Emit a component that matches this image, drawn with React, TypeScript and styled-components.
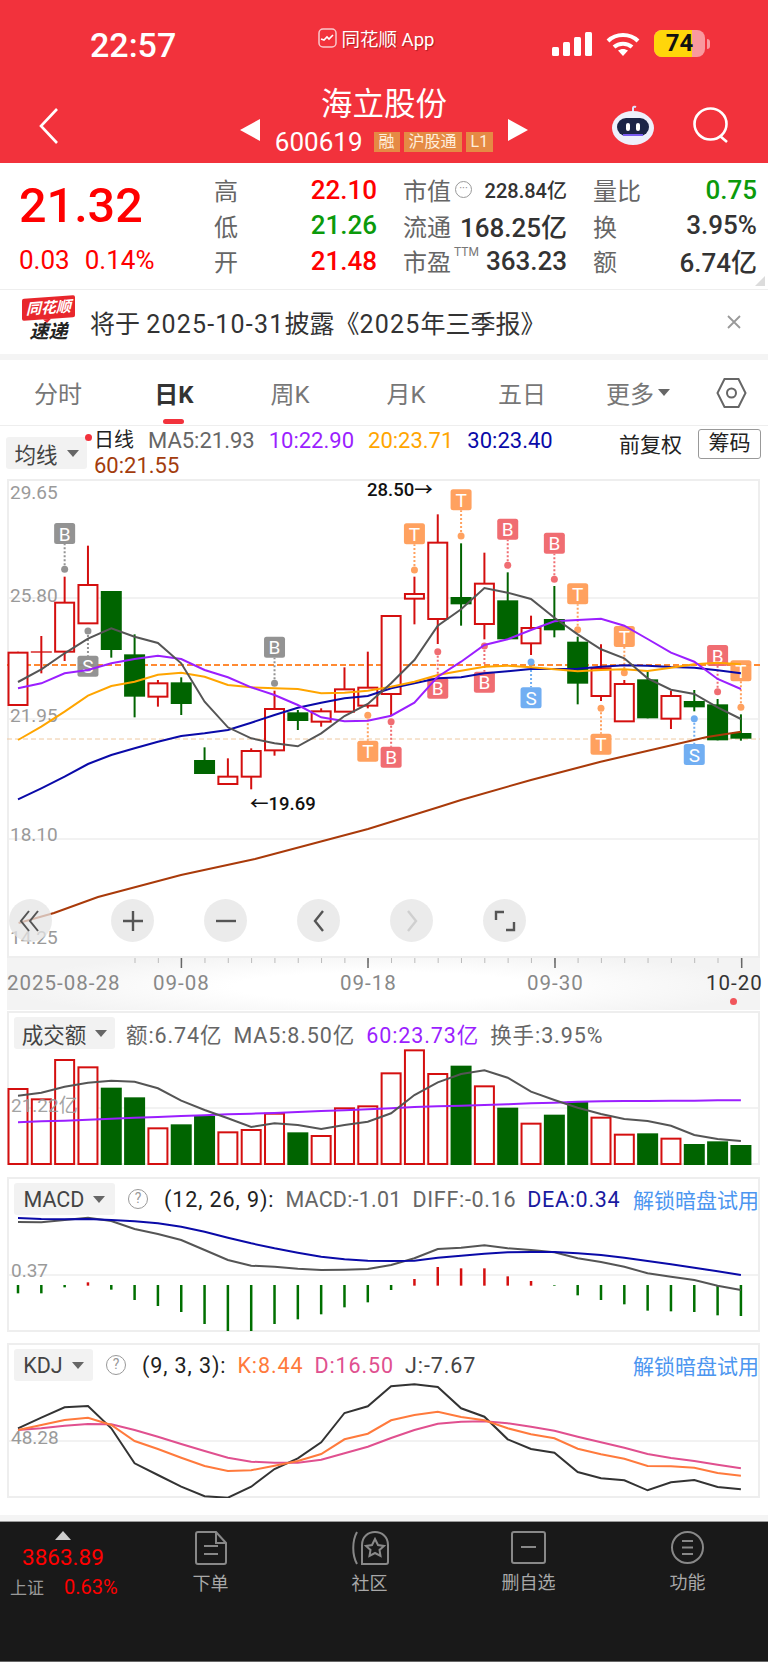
import React from "react";
import styled, { createGlobalStyle } from "styled-components";

const GlobalStyle = createGlobalStyle`
  html, body { margin: 0; padding: 0; background: #fff; }
  body { font-family: Roboto, "Noto Sans CJK SC", sans-serif; }
`;

const RED = "#ff0000";
const GREEN = "#0b9a0b";
const CANDLE_RED = "#d40f0f";
const CANDLE_GREEN = "#006400";
const LABEL_GREY = "#9a9a9a";

// chart data was read off the screenshot at 3x, so values are kept in crop pixels
const cx = (i: number) => 18 + 23.32 * i;
const mainY = (z: number) => 480 + z / 3;
const volY = (z: number) => 1010 + z / 3;
const macdY = (z: number) => 1170 + z / 3;
const kdjY = (z: number) => 1335 + z / 3;
const pts = (vals: number[], toY: (z: number) => number) =>
  vals.map((v, i) => `${cx(i).toFixed(1)},${toY(v).toFixed(1)}`).join(" ");

type Candle = ["u" | "d", number, number, number, number];
const candles: Candle[] = [
  ["u", 515, 518, 675, 675],
  ["u", 468, 514, 518, 580],
  ["u", 290, 368, 515, 543],
  ["u", 197, 315, 430, 430],
  ["d", 333, 333, 510, 533],
  ["d", 463, 523, 650, 712],
  ["u", 600, 610, 650, 680],
  ["d", 592, 607, 672, 705],
  ["d", 802, 840, 882, 882],
  ["u", 835, 890, 912, 912],
  ["u", 805, 813, 890, 928],
  ["u", 632, 687, 811, 827],
  ["d", 690, 697, 723, 750],
  ["u", 685, 694, 725, 740],
  ["u", 562, 628, 695, 695],
  ["u", 515, 623, 677, 685],
  ["u", 408, 408, 642, 705],
  ["u", 290, 342, 356, 433],
  ["u", 103, 188, 417, 492],
  ["d", 190, 351, 373, 437],
  ["u", 218, 311, 432, 478],
  ["d", 277, 361, 478, 478],
  ["u", 407, 444, 490, 525],
  ["d", 318, 417, 451, 472],
  ["d", 470, 485, 611, 673],
  ["u", 493, 565, 648, 663],
  ["u", 600, 612, 724, 724],
  ["d", 575, 598, 715, 715],
  ["u", 632, 648, 716, 747],
  ["d", 630, 663, 682, 694],
  ["d", 657, 673, 781, 781],
  ["d", 703, 759, 776, 782],
];

const markColors = { grey: "#8e8e8e", orange: "#ff9d57", red: "#f0666b", blue: "#6aaaf2" };
type Mark = { i: number; label: string; color: keyof typeof markColors; box: number; dot: number };
const marks: Mark[] = [
  { i: 2, label: "B", color: "grey", box: 129, dot: 268 },
  { i: 3, label: "S", color: "grey", box: 527, dot: 453 },
  { i: 11, label: "B", color: "grey", box: 470, dot: 610 },
  { i: 15, label: "T", color: "orange", box: 782, dot: 706 },
  { i: 16, label: "B", color: "red", box: 800, dot: 725 },
  { i: 17, label: "T", color: "orange", box: 130, dot: 270 },
  { i: 18, label: "B", color: "red", box: 593, dot: 515 },
  { i: 19, label: "T", color: "orange", box: 28, dot: 168 },
  { i: 20, label: "B", color: "red", box: 575, dot: 498 },
  { i: 21, label: "B", color: "red", box: 116, dot: 256 },
  { i: 22, label: "S", color: "blue", box: 622, dot: 546 },
  { i: 23, label: "B", color: "red", box: 158, dot: 298 },
  { i: 24, label: "T", color: "orange", box: 310, dot: 449 },
  { i: 25, label: "T", color: "orange", box: 761, dot: 685 },
  { i: 26, label: "T", color: "orange", box: 438, dot: 578 },
  { i: 29, label: "S", color: "blue", box: 792, dot: 716 },
  { i: 30, label: "B", color: "red", box: 495, dot: 635 },
  { i: 31, label: "T", color: "orange", box: 541, dot: 682 },
];

const ma5 = [606, 568, 520, 476, 445, 470, 489, 550, 665, 742, 775, 790, 799, 760, 708, 672, 610, 540, 437, 388, 324, 338, 357, 413, 463, 508, 535, 595, 629, 642, 682, 717];
const ma10 = [625, 610, 580, 570, 550, 537, 527, 537, 570, 592, 622, 645, 675, 712, 724, 722, 707, 668, 590, 545, 495, 478, 450, 424, 420, 416, 437, 477, 518, 545, 597, 627];
const ma20 = [780, 740, 695, 647, 618, 605, 584, 578, 590, 615, 622, 625, 627, 640, 638, 632, 620, 605, 585, 572, 560, 557, 562, 568, 574, 570, 568, 573, 563, 553, 548, 553];
const ma30 = [958, 925, 890, 852, 825, 805, 785, 768, 760, 750, 728, 705, 683, 668, 655, 648, 625, 610, 595, 592, 580, 574, 567, 567, 566, 560, 556, 557, 561, 563, 571, 580];
const ma60 = "18.6,923 54,913 98,897 181,875 255,859 368,829 439,807 461,800 531,780 600.7,761.7 707,737 741,731.7";

const volTops = [237, 268, 150, 172, 233, 262, 355, 343, 318, 367, 360, 311, 367, 378, 295, 289, 190, 121, 192, 167, 229, 293, 341, 314, 275, 323, 374, 370, 386, 402, 394, 405];
const volMa5 = [257, 248, 230, 218, 212, 215, 235, 272, 300, 325, 351, 340, 345, 357, 345, 335, 310, 255, 217, 192, 181, 203, 245, 270, 293, 312, 327, 333, 347, 375, 387, 393];
const volMa60 = [337, 334, 332, 329, 326, 323, 321, 318, 316, 313, 311, 309, 306, 303, 301, 298, 295, 291, 289, 287, 285, 283, 280, 278, 275, 274, 273, 273, 272, 272, 271, 271];

const macdBars = [370, 370, 352, 337, 359, 390, 408, 426, 462, 483, 483, 462, 448, 433, 412, 397, 360, 327, 291, 295, 295, 319, 333, 347, 376, 390, 403, 422, 424, 426, 436, 438];
const macdDiff = [156, 157, 150, 143, 153, 177, 192, 210, 240, 270, 287, 290, 296, 300, 299, 297, 285, 265, 237, 233, 226, 235, 240, 247, 265, 276, 290, 310, 320, 330, 347, 360];
const macdDea = [144, 147, 148, 147, 150, 154, 160, 170, 185, 203, 220, 235, 248, 260, 268, 272, 273, 272, 263, 257, 251, 247, 246, 246, 250, 255, 263, 273, 283, 293, 304, 315];

const kdjK = [285, 270, 255, 248, 270, 318, 342, 368, 393, 408, 406, 392, 378, 357, 313, 296, 256, 240, 230, 246, 256, 280, 298, 310, 341, 358, 371, 393, 394, 398, 414, 422];
const kdjD = [285, 280, 272, 267, 268, 285, 305, 327, 348, 368, 380, 383, 383, 374, 355, 335, 309, 285, 266, 260, 259, 265, 275, 287, 305, 322, 338, 357, 369, 378, 389, 400];
const kdjJ = [280, 248, 217, 213, 280, 385, 420, 455, 484, 488, 455, 402, 370, 322, 234, 214, 154, 148, 156, 220, 245, 313, 342, 353, 411, 430, 436, 466, 442, 435, 456, 463];

const Page = styled.div`
  width: 768px;
  height: 1662px;
  overflow: hidden;
  display: flex;
  flex-direction: column;
  background: #fff;
`;

/* ---------- red header ---------- */
const Header = styled.header`
  height: 163px;
  flex: none;
  background: #f2323c;
  color: #fff;
  display: flex;
  flex-direction: column;
`;
const StatusBar = styled.div`
  height: 87px;
  display: grid;
  grid-template-columns: 1fr auto 1fr;
  align-items: center;
`;
const Clock = styled.div`
  padding-left: 90px;
  padding-top: 2px;
  font-size: 34px;
  font-weight: 500;
`;
const CarrierApp = styled.div`
  display: flex;
  align-items: center;
  gap: 5px;
  margin: 0 16px 11px 0;
  font-size: 18.5px;
  color: #fff;
  text-shadow: 1px 1px 1px rgba(90, 0, 0, 0.45);
`;
const StatusIcons = styled.div`
  display: flex;
  align-items: center;
  justify-content: flex-end;
  gap: 14px;
  padding-right: 58px;
`;
const Battery = styled.div`
  position: relative;
  width: 51px;
  height: 27px;
  border-radius: 8px;
  overflow: hidden;
  background: rgba(255, 255, 255, 0.5);
  &::before {
    content: "";
    position: absolute;
    inset: 0 13px 0 0;
    background: #ffd60a;
  }
`;
const BatteryNub = styled.div`
  width: 3px;
  height: 10px;
  margin-left: -12px;
  background: rgba(255, 255, 255, 0.5);
  border-radius: 0 3px 3px 0;
`;
const BatteryText = styled.span`
  position: absolute;
  inset: 0;
  text-align: center;
  line-height: 27px;
  color: #111;
  font-size: 24px;
  font-weight: 700;
`;
const NavBar = styled.div`
  flex: 1;
  display: grid;
  grid-template-columns: 1fr auto 1fr;
  align-items: center;
  margin-top: -6px;
`;
const BackButton = styled.div`
  padding-left: 38px;
  padding-top: 8px;
  display: flex;
`;
const TitleGroup = styled.div`
  display: flex;
  align-items: center;
  gap: 15px;
`;
const Arrow = styled.div<{ $dir: "left" | "right" }>`
  width: 0;
  height: 0;
  margin-top: 16px;
  border-top: 11px solid transparent;
  border-bottom: 11px solid transparent;
  ${({ $dir }) =>
    $dir === "left" ? "border-right: 20px solid #fff;" : "border-left: 20px solid #fff;"}
`;
const TitleStack = styled.div`
  display: flex;
  flex-direction: column;
  align-items: center;
`;
const StockName = styled.div`
  font-size: 31.5px;
  line-height: 40px;
`;
const CodeRow = styled.div`
  display: flex;
  align-items: center;
  gap: 4px;
  height: 34px;
`;
const StockCode = styled.span`
  font-size: 26px;
  margin-right: 7px;
`;
const Tag = styled.span`
  height: 20px;
  padding: 0 5px;
  background: #e58a44;
  color: #ffeedd;
  font-size: 16px;
  line-height: 20px;
  white-space: nowrap;
`;
const NavRight = styled.div`
  display: flex;
  justify-content: flex-end;
  align-items: center;
  gap: 38px;
  padding-right: 39px;
  padding-top: 6px;
`;

/* ---------- quote ---------- */
const QuoteSection = styled.section`
  position: relative;
  height: 126px;
  flex: none;
  display: flex;
  box-sizing: border-box;
  padding-top: 9px;
`;
const PriceBlock = styled.div`
  width: 214px;
  flex: none;
  padding-left: 19px;
  box-sizing: border-box;
`;
const BigPrice = styled.div`
  font-size: 48.5px;
  font-weight: 500;
  line-height: 68px;
  color: ${RED};
`;
const PriceChange = styled.div`
  display: flex;
  gap: 15px;
  margin-top: 4px;
  font-size: 26px;
  line-height: 32px;
  color: ${RED};
`;
const QuoteGrid = styled.div`
  display: grid;
  grid-template-columns: 163px 164px 164px;
  column-gap: 26px;
  grid-auto-rows: 35.5px;
`;
const QuoteRow = styled.div`
  position: relative;
  display: flex;
  align-items: center;
  justify-content: space-between;
`;
const QuoteLabel = styled.span`
  font-size: 24px;
  color: #666;
`;
const QuoteValue = styled.span<{ $color?: string; $size?: number }>`
  font-size: ${({ $size }) => $size ?? 26}px;
  font-weight: 500;
  color: ${({ $color }) => $color ?? "#333"};
`;
const LabelGroup = styled.span`
  display: flex;
  align-items: center;
  gap: 4px;
`;
const MoreDot = styled.span`
  width: 17px;
  height: 17px;
  box-sizing: border-box;
  border: 1px solid #999;
  border-radius: 50%;
  color: #888;
  font-size: 11px;
  line-height: 13px;
  text-align: center;
`;
const TtmMark = styled.span`
  font-size: 12px;
  color: #777;
  align-self: flex-start;
  margin: 2px 0 0 -1px;
`;
const CornerFold = styled.div`
  position: absolute;
  right: 3px;
  bottom: 3px;
  width: 0;
  height: 0;
  border-left: 10px solid transparent;
  border-bottom: 10px solid #dcdcdc;
`;

/* ---------- news banner ---------- */
const Banner = styled.section`
  height: 71px;
  flex: none;
  display: flex;
  align-items: center;
  box-sizing: border-box;
  padding: 0 26px 0 22px;
  border-top: 1px solid #eee;
  border-bottom: 6px solid #f4f4f4;
`;
const BrandLogo = styled.div`
  width: 53px;
  display: flex;
  flex-direction: column;
  align-items: center;
  margin-top: -4px;
`;
const BrandTag = styled.div`
  position: relative;
  width: 53px;
  height: 22px;
  background: #e8262c;
  border-radius: 2px;
  color: #fff;
  font-size: 15px;
  font-weight: 700;
  font-style: italic;
  line-height: 22px;
  text-align: center;
  white-space: nowrap;
  transform: skewY(-4deg);
  &::after {
    content: "";
    position: absolute;
    left: 21px;
    bottom: -4px;
    border-left: 4px solid transparent;
    border-right: 4px solid transparent;
    border-top: 4px solid #e8262c;
  }
`;
const BrandSub = styled.div`
  margin-top: 1px;
  font-size: 19px;
  font-weight: 700;
  font-style: italic;
  line-height: 23px;
  color: #222;
`;
const BannerText = styled.div`
  flex: 1;
  margin-left: 15px;
  font-size: 25px;
  color: #333;
  white-space: nowrap;
`;
const BannerNum = styled.span`
  letter-spacing: 1.2px;
`;

/* ---------- tabs ---------- */
const TabBar = styled.nav`
  height: 66px;
  flex: none;
  box-sizing: border-box;
  display: flex;
  align-items: center;
  border-bottom: 1px solid #eee;
`;
const Tab = styled.div<{ $active?: boolean }>`
  position: relative;
  flex: none;
  width: 116px;
  height: 100%;
  display: flex;
  align-items: center;
  justify-content: center;
  font-size: 24px;
  font-weight: ${({ $active }) => ($active ? 700 : 400)};
  color: ${({ $active }) => ($active ? "#333" : "#777")};
  ${({ $active }) =>
    $active &&
    `&::after {
      content: "";
      position: absolute;
      left: 47px;
      bottom: 1px;
      width: 21px;
      height: 5px;
      border-radius: 3px;
      background: #f2323c;
    }`}
`;
const TabCaret = styled.span`
  margin-left: 4px;
  border-left: 6px solid transparent;
  border-right: 6px solid transparent;
  border-top: 7px solid #666;
`;
const TabGear = styled.div`
  display: flex;
  margin-left: 20px;
`;

/* ---------- main chart ---------- */
const LegendBar = styled.div`
  height: 53px;
  flex: none;
  display: flex;
  padding-left: 6px;
  box-sizing: border-box;
`;
const Picker = styled.div<{ $width: number }>`
  width: ${({ $width }) => $width}px;
  height: 32px;
  box-sizing: border-box;
  flex: none;
  display: flex;
  align-items: center;
  justify-content: center;
  gap: 9px;
  border-radius: 3px;
  background: #f2f2f2;
  color: #444;
  font-size: 21.5px;
`;
const PickerCaret = styled.span`
  border-left: 6px solid transparent;
  border-right: 6px solid transparent;
  border-top: 7px solid #666;
`;
const MainPicker = styled(Picker)`
  margin-top: 11px;
`;
const LegendText = styled.div`
  position: relative;
  width: 480px;
  margin-left: 7px;
  display: flex;
  flex-wrap: wrap;
  column-gap: 14px;
  align-content: flex-start;
  font-size: 22px;
  line-height: 25px;
  padding-top: 2px;
  &::before {
    content: "";
    position: absolute;
    left: -9px;
    top: 8px;
    width: 7px;
    height: 7px;
    border-radius: 50%;
    background: #f2323c;
  }
`;
const LegendItem = styled.span<{ $color: string; $size?: number }>`
  color: ${({ $color }) => $color};
  ${({ $size }) => ($size ? `font-size: ${$size}px;` : "")}
  white-space: nowrap;
`;
const LegendRight = styled.div`
  flex: 1;
  display: flex;
  align-items: flex-start;
  justify-content: flex-end;
  gap: 16px;
  padding: 3px 7px 0 0;
`;
const AdjustLabel = styled.span`
  font-size: 21px;
  line-height: 32px;
  color: #222;
`;
const ChipButton = styled.span`
  width: 63px;
  height: 30px;
  box-sizing: border-box;
  border: 1px solid #999;
  border-radius: 3px;
  font-size: 21px;
  line-height: 27px;
  text-align: center;
  color: #222;
`;
const MainChart = styled.div`
  position: relative;
  flex: none;
  width: 753px;
  height: 479px;
  margin-left: 7px;
  box-sizing: border-box;
`;
const ChartSvg = styled.svg`
  display: block;
  position: absolute;
  inset: 0;
`;
const AxisText = styled.text`
  font-size: 19px;
  fill: ${LABEL_GREY};
`;
const ExtremeText = styled.text`
  font-size: 18.5px;
  font-weight: 500;
  fill: #111;
`;
const MarkText = styled.text`
  font-size: 19px;
  fill: #fff;
  text-anchor: middle;
`;
const Toolbar = styled.div`
  position: absolute;
  left: 2px;
  top: 420px;
  display: flex;
  gap: 50px;
  & > :first-child {
    margin-right: 9.4px;
  }
`;
const RoundButton = styled.div`
  width: 43px;
  height: 43px;
  border-radius: 50%;
  background: rgba(228, 228, 228, 0.75);
  display: flex;
  align-items: center;
  justify-content: center;
`;

/* ---------- date axis ---------- */
const DateAxis = styled.div`
  position: relative;
  flex: none;
  height: 52px;
  margin-left: 7px;
  width: 753px;
  background: radial-gradient(ellipse 50% 70% at 50% 55%, #fff 40%, #f3f3f3 100%);
`;
const TickSvg = styled.svg`
  display: block;
  position: absolute;
  inset: 0;
`;
const DateLabels = styled.div`
  display: grid;
  grid-template-columns: 146px 187px 187px 179px auto;
  padding-top: 10px;
  font-size: 20.5px;
  letter-spacing: 1px;
  line-height: 30px;
  color: #888;
  white-space: nowrap;
`;
const LatestDate = styled.span`
  position: relative;
  color: #333;
  &::after {
    content: "";
    position: absolute;
    left: 24px;
    top: 30px;
    width: 7px;
    height: 7px;
    border-radius: 50%;
    background: #f0555b;
  }
`;

/* ---------- indicator panels ---------- */
const Panel = styled.section<{ $height: number; $gap: number }>`
  position: relative;
  flex: none;
  width: 753px;
  height: ${({ $height }) => $height}px;
  margin: ${({ $gap }) => $gap}px 0 0 7px;
  box-sizing: border-box;
  outline: 2px solid #eeeeee;
  outline-offset: -2px;
`;
const PanelHead = styled.div`
  position: absolute;
  left: 7px;
  right: 0;
  top: 6px;
  display: flex;
  align-items: center;
  gap: 11px;
  font-size: 21.5px;
`;
const HelpMark = styled.span`
  flex: none;
  width: 20px;
  height: 20px;
  margin: 0 5px 0 2px;
  box-sizing: border-box;
  border: 1.5px solid #999;
  border-radius: 50%;
  color: #999;
  font-size: 14px;
  line-height: 17px;
  text-align: center;
`;
const HeadValue = styled.span<{ $color: string; $spacing?: number }>`
  color: ${({ $color }) => $color};
  letter-spacing: ${({ $spacing }) => $spacing ?? 0.9}px;
  white-space: nowrap;
`;
const UnlockLink = styled.span`
  margin-left: auto;
  margin-right: 1px;
  flex: none;
  color: #4c96f0;
  font-size: 21px;
  white-space: nowrap;
`;

const FooterGap = styled.div`
  flex: none;
  height: 17px;
  border-bottom: 6px solid #f4f4f4;
`;

/* ---------- footer ---------- */
const Footer = styled.footer`
  flex: 1;
  display: flex;
  background: #191919;
  border-top: 1px solid #9a9a9a;
  border-bottom: 1px solid #666;
`;
const IndexBlock = styled.div`
  width: 131px;
  flex: none;
  box-sizing: border-box;
  padding: 9px 0 0 10px;
`;
const IndexCaret = styled.div`
  width: 0;
  margin-left: 45px;
  border-left: 8px solid transparent;
  border-right: 8px solid transparent;
  border-bottom: 9px solid #cccccc;
`;
const IndexValue = styled.div`
  margin: 2px 0 0 12px;
  font-size: 22.5px;
  line-height: 30px;
  color: ${RED};
`;
const IndexRow = styled.div`
  display: flex;
  align-items: center;
  gap: 20px;
  margin-top: 2px;
`;
const IndexName = styled.span`
  font-size: 17px;
  color: #999;
`;
const IndexPct = styled.span`
  font-size: 20px;
  color: ${RED};
`;
const FooterItem = styled.div`
  width: 159px;
  padding-top: 9px;
  display: flex;
  flex-direction: column;
  align-items: center;
  gap: 7px;
  color: #a8a8a8;
  font-size: 18px;
  line-height: 24px;
`;
const FooterIcon = styled.svg`
  display: block;
  fill: none;
  stroke: #888;
  stroke-width: 2;
`;

function MainSvg() {
  return (
    <ChartSvg width={753} height={479} viewBox="7 479 753 479">
      <rect x={8} y={480} width={751} height={477} fill="none" stroke="#eee" strokeWidth={2} />
      <line x1={7} x2={760} y1={598} y2={598} stroke="#eee" strokeWidth={1.5} />
      <line x1={7} x2={760} y1={719} y2={719} stroke="#eee" strokeWidth={1.5} />
      <line x1={7} x2={760} y1={839} y2={839} stroke="#eee" strokeWidth={1.5} />
      <line x1={7} x2={760} y1={665} y2={665} stroke="#ff8a33" strokeWidth={2} strokeDasharray="6 3" />
      <line x1={7} x2={760} y1={739} y2={739} stroke="#eec8a0" strokeWidth={1} strokeDasharray="5 3" />
      <AxisText x={10} y={499}>29.65</AxisText>
      <AxisText x={10} y={602}>25.80</AxisText>
      <AxisText x={10} y={722}>21.95</AxisText>
      <AxisText x={10} y={841}>18.10</AxisText>
      <AxisText x={10} y={944}>14.25</AxisText>

      {candles.map(([kind, wt, top, bot, wb], i) => {
        const x = cx(i);
        const color = kind === "u" ? CANDLE_RED : CANDLE_GREEN;
        const flat = bot - top < 8;
        return (
          <g key={i}>
            <line x1={x} x2={x} y1={mainY(wt)} y2={mainY(wb)} stroke={color} strokeWidth={2} />
            {kind === "u" && !flat ? (
              <rect x={x - 9.5} y={mainY(top)} width={19} height={(bot - top) / 3} fill="#fff" stroke={color} strokeWidth={2} />
            ) : (
              <rect x={x - 10.5} y={mainY(top)} width={21} height={(bot - top) / 3} fill={color} />
            )}
          </g>
        );
      })}

      {marks.map((m) => {
        const x = cx(m.i);
        const c = markColors[m.color];
        const above = m.box < m.dot;
        const y = mainY(m.box);
        return (
          <g key={m.i} opacity={0.95}>
            <line
              x1={x}
              x2={x}
              y1={mainY(m.dot)}
              y2={above ? y + 21 : y}
              stroke={c}
              strokeWidth={2}
              strokeDasharray="2 2"
            />
            <circle cx={x} cy={mainY(m.dot)} r={3.5} fill={c} />
            <rect x={x - 10.5} y={y} width={21} height={21} rx={2.5} fill={c} />
            <MarkText x={x} y={y + 17.5}>{m.label}</MarkText>
          </g>
        );
      })}

      <polyline points={ma60} fill="none" stroke="#a93a0a" strokeWidth={2} />
      <polyline points={pts(ma30, mainY)} fill="none" stroke="#0a0aa8" strokeWidth={2} />
      <polyline points={pts(ma20, mainY)} fill="none" stroke="#ffa500" strokeWidth={2} />
      <polyline points={pts(ma10, mainY)} fill="none" stroke="#9b1fff" strokeWidth={2} />
      <polyline points={pts(ma5, mainY)} fill="none" stroke="#555" strokeWidth={2} />

      <ExtremeText x={367} y={496}>28.50→</ExtremeText>
      <ExtremeText x={250} y={810}>←19.69</ExtremeText>
    </ChartSvg>
  );
}

function VolumeSvg() {
  return (
    <ChartSvg width={753} height={154} viewBox="7 1011 753 154">
      <line x1={7} x2={760} y1={1108} y2={1108} stroke="#eee" strokeWidth={1.5} />
      {volTops.map((t, i) => {
        const x = cx(i);
        const up = candles[i][0] === "u";
        const y = volY(t);
        return up ? (
          <rect key={i} x={x - 9.5} y={y} width={19} height={1164 - y} fill="#fff" stroke={CANDLE_RED} strokeWidth={2} />
        ) : (
          <rect key={i} x={x - 10.5} y={y} width={21} height={1165 - y} fill={CANDLE_GREEN} />
        );
      })}
      <AxisText x={11} y={1112} opacity={0.9}>21.22亿</AxisText>
      <polyline points={pts(volMa60, volY)} fill="none" stroke="#9b1fff" strokeWidth={2} />
      <polyline points={pts(volMa5, volY)} fill="none" stroke="#555" strokeWidth={2} />
    </ChartSvg>
  );
}

function MacdSvg() {
  return (
    <ChartSvg width={753} height={155} viewBox="7 1177 753 155">
      <line x1={7} x2={760} y1={1275} y2={1275} stroke="#eee" strokeWidth={1.5} />
      <AxisText x={11} y={1277}>0.37</AxisText>
      {macdBars.map((b, i) => {
        const x = cx(i);
        const up = i === 3 || (i >= 17 && i <= 22);
        return up ? (
          <line key={i} x1={x} x2={x} y1={macdY(b)} y2={macdY(347)} stroke="#d40f0f" strokeWidth={2.5} />
        ) : (
          <line key={i} x1={x} x2={x} y1={macdY(345)} y2={macdY(b)} stroke="#006f00" strokeWidth={2.5} />
        );
      })}
      <polyline points={pts(macdDiff, macdY)} fill="none" stroke="#555" strokeWidth={2} />
      <polyline points={pts(macdDea, macdY)} fill="none" stroke="#0a0aa8" strokeWidth={2} />
    </ChartSvg>
  );
}

function KdjSvg() {
  return (
    <ChartSvg width={753} height={155} viewBox="7 1343 753 155">
      <line x1={7} x2={760} y1={1441} y2={1441} stroke="#eee" strokeWidth={1.5} />
      <AxisText x={11} y={1444}>48.28</AxisText>
      <polyline points={pts(kdjJ, kdjY)} fill="none" stroke="#333" strokeWidth={2} />
      <polyline points={pts(kdjD, kdjY)} fill="none" stroke="#e0508f" strokeWidth={2} />
      <polyline points={pts(kdjK, kdjY)} fill="none" stroke="#ff7a3c" strokeWidth={2} />
    </ChartSvg>
  );
}

function RoundIcon({ children }: { children: React.ReactNode }) {
  return (
    <RoundButton>
      <svg width={26} height={26} viewBox="0 0 26 26" fill="none" stroke="#555" strokeWidth={2.4}>
        {children}
      </svg>
    </RoundButton>
  );
}

export default function App() {
  const minor = Array.from({ length: 27 }, (_, i) => 135 - 7 + 23.32 * i);
  return (
    <Page>
      <GlobalStyle />
      <Header>
        <StatusBar>
          <Clock>22:57</Clock>
          <CarrierApp>
            <svg width={19} height={20} viewBox="0 0 19 20">
              <rect x={1} y={1} width={17} height={18} rx={4} fill="#f2323c" stroke="#f9c9cc" strokeWidth={1.5} />
              <path d="M3 11l3 1 3-3 2 2 4-4" fill="none" stroke="#fff" strokeWidth={1.6} />
            </svg>
            同花顺 App
          </CarrierApp>
          <StatusIcons>
            <svg width={40} height={24} viewBox="0 0 40 24" fill="#fff">
              <rect x={0} y={15} width={7} height={9} rx={1.5} />
              <rect x={11} y={10} width={7} height={14} rx={1.5} />
              <rect x={22} y={5} width={7} height={19} rx={1.5} />
              <rect x={33} y={0} width={7} height={24} rx={1.5} />
            </svg>
            <svg width={34} height={24} viewBox="0 0 34 24">
              <path d="M2 9C10 1 24 1 32 9" fill="none" stroke="#fff" strokeWidth={4} />
              <path d="M8 15C13 10.5 21 10.5 26 15" fill="none" stroke="#fff" strokeWidth={4} />
              <path d="M17 24L12 18.6C15 16.4 19 16.4 22 18.6Z" fill="#fff" />
            </svg>
            <Battery>
              <BatteryText>74</BatteryText>
            </Battery>
            <BatteryNub />
          </StatusIcons>
        </StatusBar>
        <NavBar>
          <BackButton>
            <svg width={22} height={36} viewBox="0 0 22 36" fill="none" stroke="#fff" strokeWidth={2.6}>
              <path d="M19 1L3 18l16 17" />
            </svg>
          </BackButton>
          <TitleGroup>
            <Arrow $dir="left" />
            <TitleStack>
              <StockName>海立股份</StockName>
              <CodeRow>
                <StockCode>600619</StockCode>
                <Tag>融</Tag>
                <Tag>沪股通</Tag>
                <Tag>L1</Tag>
              </CodeRow>
            </TitleStack>
            <Arrow $dir="right" />
          </TitleGroup>
          <NavRight>
            <svg width={44} height={40} viewBox="0 0 44 40">
              <path d="M22 7V3c0-1.5 2-1.5 3-1" fill="none" stroke="#dfe4ff" strokeWidth={2} />
              <ellipse cx={22} cy={23} rx={21} ry={17} fill="#eef0fb" />
              <rect x={6} y={13} width={32} height={18} rx={9} fill="#1c2447" />
              <path d="M12 30h20" stroke="#7a5cf0" strokeWidth={2} />
              <rect x={15} y={18} width={4} height={8} rx={2} fill="#fff" />
              <rect x={25} y={18} width={4} height={8} rx={2} fill="#fff" />
            </svg>
            <svg width={36} height={36} viewBox="0 0 36 36" fill="none" stroke="#fff" strokeWidth={2.6}>
              <ellipse cx={17.5} cy={17} rx={16} ry={15.5} />
              <path d="M27 29l7 6" />
            </svg>
          </NavRight>
        </NavBar>
      </Header>

      <QuoteSection>
        <PriceBlock>
          <BigPrice>21.32</BigPrice>
          <PriceChange>
            <span>0.03</span>
            <span>0.14%</span>
          </PriceChange>
        </PriceBlock>
        <QuoteGrid>
          <QuoteRow>
            <QuoteLabel>高</QuoteLabel>
            <QuoteValue $color={RED}>22.10</QuoteValue>
          </QuoteRow>
          <QuoteRow>
            <LabelGroup>
              <QuoteLabel>市值</QuoteLabel>
              <MoreDot>···</MoreDot>
            </LabelGroup>
            <QuoteValue $size={20}>228.84亿</QuoteValue>
          </QuoteRow>
          <QuoteRow>
            <QuoteLabel>量比</QuoteLabel>
            <QuoteValue $color={GREEN}>0.75</QuoteValue>
          </QuoteRow>
          <QuoteRow>
            <QuoteLabel>低</QuoteLabel>
            <QuoteValue $color={GREEN}>21.26</QuoteValue>
          </QuoteRow>
          <QuoteRow>
            <QuoteLabel>流通</QuoteLabel>
            <QuoteValue>168.25亿</QuoteValue>
          </QuoteRow>
          <QuoteRow>
            <QuoteLabel>换</QuoteLabel>
            <QuoteValue>3.95%</QuoteValue>
          </QuoteRow>
          <QuoteRow>
            <QuoteLabel>开</QuoteLabel>
            <QuoteValue $color={RED}>21.48</QuoteValue>
          </QuoteRow>
          <QuoteRow>
            <LabelGroup>
              <QuoteLabel>市盈</QuoteLabel>
              <TtmMark>TTM</TtmMark>
            </LabelGroup>
            <QuoteValue>363.23</QuoteValue>
          </QuoteRow>
          <QuoteRow>
            <QuoteLabel>额</QuoteLabel>
            <QuoteValue>6.74亿</QuoteValue>
          </QuoteRow>
        </QuoteGrid>
        <CornerFold />
      </QuoteSection>

      <Banner>
        <BrandLogo>
          <BrandTag>同花顺</BrandTag>
          <BrandSub>速递</BrandSub>
        </BrandLogo>
        <BannerText>
          将于 <BannerNum>2025-10-31</BannerNum>披露《<BannerNum>2025</BannerNum>年三季报》
        </BannerText>
        <svg width={16} height={16} viewBox="0 0 16 16" stroke="#999" strokeWidth={1.8}>
          <path d="M2 2l12 12M14 2L2 14" />
        </svg>
      </Banner>

      <TabBar>
        <Tab>分时</Tab>
        <Tab $active>日K</Tab>
        <Tab>周K</Tab>
        <Tab>月K</Tab>
        <Tab>五日</Tab>
        <Tab>
          更多
          <TabCaret />
        </Tab>
        <TabGear>
          <svg width={31} height={32} viewBox="0 0 31 32" fill="none" stroke="#666" strokeWidth={2}>
            <path d="M8.5 2h14l7 14-7 14h-14l-7-14z" />
            <circle cx={15.5} cy={16} r={4.5} />
          </svg>
        </TabGear>
      </TabBar>

      <LegendBar>
        <MainPicker $width={81}>
          均线
          <PickerCaret />
        </MainPicker>
        <LegendText>
          <LegendItem $color="#222" $size={20}>日线</LegendItem>
          <LegendItem $color="#666">MA5:21.93</LegendItem>
          <LegendItem $color="#9b1fff">10:22.90</LegendItem>
          <LegendItem $color="#ffa500">20:23.71</LegendItem>
          <LegendItem $color="#0a0aa8">30:23.40</LegendItem>
          <LegendItem $color="#a33c0d">60:21.55</LegendItem>
        </LegendText>
        <LegendRight>
          <AdjustLabel>前复权</AdjustLabel>
          <ChipButton>筹码</ChipButton>
        </LegendRight>
      </LegendBar>

      <MainChart>
        <MainSvg />
        <Toolbar>
          <RoundIcon>
            <path d="M11 3L3 13l8 10M20 3l-8 10 8 10" strokeWidth={2} />
          </RoundIcon>
          <RoundIcon>
            <path d="M3 13h20M13 3v20" />
          </RoundIcon>
          <RoundIcon>
            <path d="M3 13h20" />
          </RoundIcon>
          <RoundIcon>
            <path d="M17 3l-8 10 8 10" />
          </RoundIcon>
          <RoundIcon>
            <path d="M9 3l8 10-8 10" stroke="#cfcfcf" />
          </RoundIcon>
          <RoundIcon>
            <path d="M12 4H4v8M14 22h8v-8" />
          </RoundIcon>
        </Toolbar>
      </MainChart>

      <DateAxis>
        <TickSvg width={753} height={52} viewBox="0 0 753 52" stroke="#bbb">
          {minor.map((x) => (
            <line key={x} x1={x} x2={x} y1={0} y2={5} />
          ))}
          {[174.4, 361, 548, 734.7].map((x) => (
            <line key={x} x1={x} x2={x} y1={0} y2={10} stroke="#666" strokeWidth={1.5} />
          ))}
        </TickSvg>
        <DateLabels>
          <span>2025-08-28</span>
          <span>09-08</span>
          <span>09-18</span>
          <span>09-30</span>
          <LatestDate>10-20</LatestDate>
        </DateLabels>
      </DateAxis>

      <Panel $height={154} $gap={1}>
        <VolumeSvg />
        <PanelHead>
          <Picker $width={101}>
            成交额
            <PickerCaret />
          </Picker>
          <HeadValue $color="#666">额:6.74亿</HeadValue>
          <HeadValue $color="#666">MA5:8.50亿</HeadValue>
          <HeadValue $color="#9b1fff">60:23.73亿</HeadValue>
          <HeadValue $color="#666">换手:3.95%</HeadValue>
        </PanelHead>
      </Panel>

      <Panel $height={155} $gap={12}>
        <MacdSvg />
        <PanelHead>
          <Picker $width={101}>
            MACD
            <PickerCaret />
          </Picker>
          <HelpMark>?</HelpMark>
          <HeadValue $color="#222">(12, 26, 9):</HeadValue>
          <HeadValue $color="#666" $spacing={0.2}>MACD:-1.01</HeadValue>
          <HeadValue $color="#666" $spacing={0.7}>DIFF:-0.16</HeadValue>
          <HeadValue $color="#1a1aa0" $spacing={0.7}>DEA:0.34</HeadValue>
          <UnlockLink>解锁暗盘试用</UnlockLink>
        </PanelHead>
      </Panel>

      <Panel $height={155} $gap={11}>
        <KdjSvg />
        <PanelHead>
          <Picker $width={79}>
            KDJ
            <PickerCaret />
          </Picker>
          <HelpMark>?</HelpMark>
          <HeadValue $color="#222">(9, 3, 3):</HeadValue>
          <HeadValue $color="#ff7a3c">K:8.44</HeadValue>
          <HeadValue $color="#e0508f">D:16.50</HeadValue>
          <HeadValue $color="#444">J:-7.67</HeadValue>
          <UnlockLink>解锁暗盘试用</UnlockLink>
        </PanelHead>
      </Panel>

      <FooterGap />

      <Footer>
        <IndexBlock>
          <IndexCaret />
          <IndexValue>3863.89</IndexValue>
          <IndexRow>
            <IndexName>上证</IndexName>
            <IndexPct>0.63%</IndexPct>
          </IndexRow>
        </IndexBlock>
        <FooterItem>
          <FooterIcon width={32} height={34} viewBox="0 0 32 34">
            <path d="M3 1h18l10 11v19a2 2 0 0 1-2 2H3a2 2 0 0 1-2-2V3a2 2 0 0 1 2-2zM21 1v11h10M9 15h14M9 23h14" />
          </FooterIcon>
          下单
        </FooterItem>
        <FooterItem>
          <FooterIcon width={38} height={34} viewBox="0 0 38 34">
            <path d="M6 1C1 10 1 24 6 33" />
            <path d="M11 33V14C11 6 17 1 24 1s13 5 13 13v17a2 2 0 0 1-2 2z" />
            <path d="M24 8l3 6 6 1-4.500 4 1 6-5.500-3-5.500 3 1-6-4.500-4 6-1z" />
          </FooterIcon>
          社区
        </FooterItem>
        <FooterItem>
          <FooterIcon width={35} height={33} viewBox="0 0 35 33">
            <rect x={1} y={1} width={33} height={31} rx={2} />
            <path d="M10 16h15" />
          </FooterIcon>
          删自选
        </FooterItem>
        <FooterItem>
          <FooterIcon width={33} height={33} viewBox="0 0 33 33">
            <circle cx={16.5} cy={16.5} r={15.5} />
            <path d="M11 10h11M11 16.500h11M11 23h11" />
          </FooterIcon>
          功能
        </FooterItem>
      </Footer>
    </Page>
  );
}
